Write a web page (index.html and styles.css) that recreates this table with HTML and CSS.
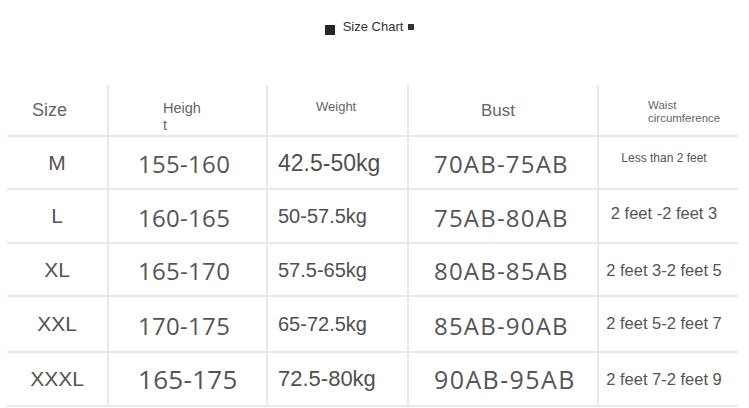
FILE: index.html
```html
<!DOCTYPE html>
<html lang="en">
<head>
<meta charset="utf-8">
<title>Size Chart</title>
<link rel="stylesheet" href="styles.css">
</head>
<body>
<div class="title">
  <span class="sq-big"></span>
  <span class="title-text">Size Chart</span>
  <span class="sq-small"></span>
</div>
<div class="chart">
  <div class="cell c1 hd"><span class="h-size">Size</span></div>
  <div class="cell c2 hd"><span class="h-height">Heigh<br>t</span></div>
  <div class="cell c3 hd"><span class="h-weight">Weight</span></div>
  <div class="cell c4 hd"><span class="h-bust">Bust</span></div>
  <div class="cell c5 hd"><span class="h-waist">Waist<br>circumference</span></div>

  <div class="cell c1"><span class="sz">M</span></div>
  <div class="cell c2"><span class="ht">155-160</span></div>
  <div class="cell c3"><span class="wt wt-m">42.5-50kg</span></div>
  <div class="cell c4"><span class="bs">70AB-75AB</span></div>
  <div class="cell c5 up5"><span class="ws ws-sm">Less than 2 feet</span></div>

  <div class="cell c1"><span class="sz">L</span></div>
  <div class="cell c2"><span class="ht">160-165</span></div>
  <div class="cell c3"><span class="wt">50-57.5kg</span></div>
  <div class="cell c4"><span class="bs">75AB-80AB</span></div>
  <div class="cell c5 up4"><span class="ws">2 feet -2 feet 3</span></div>

  <div class="cell c1"><span class="sz">XL</span></div>
  <div class="cell c2"><span class="ht">165-170</span></div>
  <div class="cell c3"><span class="wt">57.5-65kg</span></div>
  <div class="cell c4"><span class="bs">80AB-85AB</span></div>
  <div class="cell c5"><span class="ws">2 feet 3-2 feet 5</span></div>

  <div class="cell c1"><span class="sz">XXL</span></div>
  <div class="cell c2"><span class="ht">170-175</span></div>
  <div class="cell c3"><span class="wt">65-72.5kg</span></div>
  <div class="cell c4"><span class="bs">85AB-90AB</span></div>
  <div class="cell c5 up2"><span class="ws">2 feet 5-2 feet 7</span></div>

  <div class="cell c1"><span class="sz">XXXL</span></div>
  <div class="cell c2"><span class="ht ht-lg">165-175</span></div>
  <div class="cell c3"><span class="wt wt-lg">72.5-80kg</span></div>
  <div class="cell c4"><span class="bs bs-lg">90AB-95AB</span></div>
  <div class="cell c5"><span class="ws">2 feet 7-2 feet 9</span></div>
</div>
</body>
</html>
```

FILE: styles.css
```css
* { box-sizing: border-box; }
html, body { margin: 0; padding: 0; background: #fff; }
body {
  width: 749px;
  height: 408px;
  overflow: hidden;
  font-family: "Liberation Sans", Arial, sans-serif;
  color: #555;
}

.title {
  display: flex;
  justify-content: center;
  align-items: flex-start;
  height: 36px;
  padding-top: 19px;
  padding-right: 10px;
  margin-bottom: 49px;
}
.sq-big {
  width: 10px;
  height: 10px;
  background: #262626;
  margin-top: 6px;
  margin-right: 8px;
}
.title-text {
  font-size: 13px;
  line-height: 15px;
  color: #333;
}
.sq-small {
  width: 6px;
  height: 6px;
  background: #333;
  margin-top: 5px;
  margin-left: 5px;
}

.chart {
  display: grid;
  grid-template-columns: 100px 159px 141px 190px 141px;
  grid-template-rows: 52px 53px 54px 53px 56px 54px;
  margin-left: 7px;
  width: 731px;
}
.cell {
  display: flex;
  align-items: center;
  border-bottom: 2px solid #e8e8e8;
  white-space: nowrap;
}
.c2, .c3, .c4, .c5 { border-left: 2px solid #e8e8e8; }
.c1 { justify-content: center; }
.c2 { padding-left: 29px; }
.c3 { padding-left: 10px; }
.c4 { padding-left: 25px; }
.c5 { justify-content: center; padding-right: 9px; }

.hd { align-items: flex-start; justify-content: flex-start; padding-right: 0; color: #666; }
.c1.hd { padding-left: 0; }
.h-size { font-size: 18px; line-height: 21px; margin-top: 15px; margin-left: 25px; }
.h-height { font-size: 14.5px; line-height: 16.8px; margin-top: 15px; margin-left: 25px; }
.h-weight { font-size: 13px; line-height: 15px; margin-top: 14px; margin-left: 38px; }
.h-bust { font-size: 17px; line-height: 20px; margin-top: 16px; margin-left: 47px; }
.h-waist { font-size: 11.5px; line-height: 13.4px; margin-top: 14px; margin-left: 49px; }

.sz { font-size: 21px; line-height: 24px; color: #555; }
.ht {
  font-family: "Open Sans", sans-serif;
  font-size: 24px;
  line-height: 30px;
  letter-spacing: 0.3px;
  color: #555;
  margin-top: 3px;
}
.ht-lg { font-size: 26px; margin-top: 0; }
.wt { font-size: 20px; line-height: 24px; color: #505050; }
.wt-m { font-size: 23px; line-height: 27px; margin-top: 2px; }
.wt-lg { font-size: 22px; line-height: 26px; }
.bs {
  font-family: "Open Sans", sans-serif;
  font-size: 24px;
  line-height: 30px;
  letter-spacing: 1.2px;
  color: #555;
  margin-top: 3px;
}
.bs-lg { font-size: 25px; letter-spacing: 1.4px; margin-top: 0; }
.ws { font-size: 16.5px; line-height: 20px; color: #555; }
.ws-sm { font-size: 12px; line-height: 14px; }
.up5 { padding-bottom: 10px; }
.up4 { padding-bottom: 7px; }
.up2 { padding-bottom: 3px; }
```
